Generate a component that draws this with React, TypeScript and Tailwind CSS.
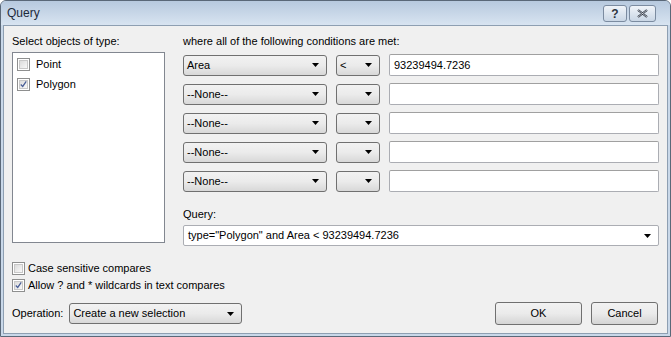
import React from "react";

const Arrow = () => (
  <svg width="7" height="4" viewBox="0 0 7 4" className="shrink-0">
    <path d="M0 0 H7 L3.5 4 Z" fill="#000" />
  </svg>
);

const Combo = ({ text, w }: { text: string; w: string }) => (
  <div
    className={`${w} h-[21px] flex items-center justify-between pl-[3px] pr-[7px] rounded-[3px] border border-[#707070] bg-gradient-to-b from-[#f2f2f2] via-[#ebebeb] to-[#d8d8d8] text-black`}
  >
    <span>{text}</span>
    <Arrow />
  </div>
);

const Check = ({ checked }: { checked?: boolean }) => (
  <div className="w-[13px] h-[13px] border border-[#8e8f8f] bg-white p-[1px] shrink-0">
    <div className="w-full h-full bg-gradient-to-br from-[#dcdcdc] to-[#f8f8f8] border border-[#c8c8c8] flex items-center justify-center">
      {checked && (
        <svg width="9" height="9" viewBox="0 0 9 9">
          <path d="M1 4.5 L3.5 7 L8 0.5" stroke="#4a5f97" strokeWidth="1.6" fill="none" />
        </svg>
      )}
    </div>
  </div>
);

const Row = ({ field, op, value }: { field: string; op: string; value: string }) => (
  <div className="flex items-center h-[22px]">
    <Combo text={field} w="w-[144px]" />
    <div className="w-[9px]" />
    <Combo text={op} w="w-[44px]" />
    <div className="w-[9px]" />
    <div className="w-[270px] h-[22px] bg-white border border-[#abadb3] border-t-[#a0a0a0] rounded-[2px] flex items-center pl-[4px] text-black">
      {value}
    </div>
  </div>
);

const Btn = ({ label, w }: { label: string; w: string }) => (
  <div
    className={`${w} h-[23px] flex items-center justify-center rounded-[3px] border border-[#707070] bg-gradient-to-b from-[#f2f2f2] via-[#ebebeb] to-[#d4d4d4] text-black`}
  >
    {label}
  </div>
);

const CheckRow = ({ label, checked, gap }: { label: string; checked?: boolean; gap: string }) => (
  <div className={`flex items-center h-[13px] leading-[13px] ${gap}`}>
    <Check checked={checked} />
    <span>{label}</span>
  </div>
);

export default function App() {
  return (
    <div className="w-[671px] h-[337px] font-['Liberation_Sans',Arial,sans-serif] text-[11px] text-black bg-[#c9d8e9] border border-[#5a6878] rounded-t-[6px] flex flex-col overflow-hidden">
      {/* title bar */}
      <div className="h-[24px] shrink-0 flex items-center justify-between pl-[6px] pr-[14px] bg-gradient-to-b from-[#b7c9de] to-[#d8e4f1]">
        <span className="text-[12px] text-[#1d2a3a]">Query</span>
        <div className="flex gap-[2px] pt-[1px]">
          <div className="w-[24px] h-[17px] rounded-[3px] border border-[#7b8ba0] bg-gradient-to-b from-[#f0f4f9] to-[#c9d6e5] flex items-center justify-center text-[12px] font-bold text-[#2c3440]">
            ?
          </div>
          <div className="w-[27px] h-[17px] rounded-[3px] border border-[#7b8ba0] bg-gradient-to-b from-[#f0f4f9] to-[#c9d6e5] flex items-center justify-center">
            <svg width="11" height="9" viewBox="0 0 11 9">
              <path d="M1 1 L10 8 M10 1 L1 8" stroke="#2c3440" strokeWidth="2.2" />
              <path d="M1 1 L10 8 M10 1 L1 8" stroke="#e8edf3" strokeWidth="0.7" />
            </svg>
          </div>
        </div>
      </div>
      {/* body */}
      <div className="flex-1 mx-[2px] mb-[2px] bg-[#f0f0f0] border border-[#8e9fb2] flex flex-col pl-[8px] pr-[9px] pt-[8px]">
        <div className="flex">
          {/* left */}
          <div className="w-[153px] shrink-0 flex flex-col">
            <div className="h-[14px] leading-[14px]">Select objects of type:</div>
            <div className="mt-[4px] h-[191px] bg-white border border-[#828790] flex flex-col pl-[4px] pt-[5px] gap-[7px]">
              <CheckRow label="Point" gap="gap-[6px]" />
              <CheckRow label="Polygon" checked gap="gap-[6px]" />
            </div>
          </div>
          <div className="w-[18px] shrink-0" />
          {/* right */}
          <div className="flex flex-col w-[476px] shrink-0">
            <div className="h-[14px] leading-[14px]">where all of the following conditions are met:</div>
            <div className="mt-[6px] flex flex-col gap-[7px]">
              <Row field="Area" op="<" value="93239494.7236" />
              <Row field="--None--" op="" value="" />
              <Row field="--None--" op="" value="" />
              <Row field="--None--" op="" value="" />
              <Row field="--None--" op="" value="" />
            </div>
            <div className="mt-[15px] h-[14px] leading-[14px]">Query:</div>
            <div className="mt-[4px] w-[476px] h-[21px] bg-white border border-[#abadb3] rounded-[2px] flex items-center justify-between pl-[4px] pr-[7px]">
              <span>type="Polygon" and Area &lt; 93239494.7236</span>
              <Arrow />
            </div>
          </div>
        </div>
        {/* bottom */}
        <div className="mt-[16px] flex flex-col gap-[4px]">
          <CheckRow label="Case sensitive compares" gap="gap-[3px]" />
          <CheckRow label="Allow ? and * wildcards in text compares" checked gap="gap-[3px]" />
        </div>
        <div className="mt-[10px] flex items-center">
          <span>Operation:</span>
          <div className="w-[6px]" />
          <Combo text="Create a new selection" w="w-[173px]" />
          <div className="flex-1" />
          <Btn label="OK" w="w-[87px]" />
          <div className="w-[9px]" />
          <Btn label="Cancel" w="w-[67px]" />
        </div>
      </div>
    </div>
  );
}
